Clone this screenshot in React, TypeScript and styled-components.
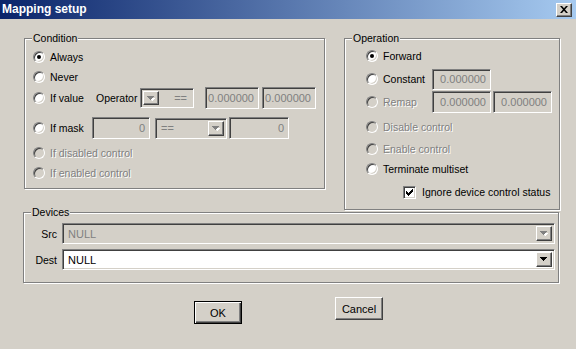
import styled, { createGlobalStyle, css } from "styled-components";

const GlobalStyle = createGlobalStyle`
  body {
    margin: 0;
    background: #d4d0c8;
    font-family: "Liberation Sans", Arial, sans-serif;
    font-size: 10.5px;
    color: #000;
  }
`;

const face = "#d4d0c8";
const shadow = "#808080";
const dark = "#404040";

const Window = styled.div`
  width: 576px;
  height: 349px;
  background: ${face};
  display: flex;
  flex-direction: column;
  overflow: hidden;
`;

const TitleBar = styled.div`
  height: 19px;
  flex-shrink: 0;
  display: flex;
  align-items: center;
  justify-content: space-between;
  padding: 0 4px 0 2px;
  background: linear-gradient(to right, #0a246a, #a6caf0);
`;

const TitleText = styled.span`
  color: #fff;
  font-weight: bold;
  font-size: 12px;
  line-height: 19px;
`;

const raised = css`
  border: 1px solid;
  border-color: #fff ${dark} ${dark} #fff;
  box-shadow: inset -1px -1px ${shadow};
`;

const sunken = css`
  border: 1px solid;
  border-color: ${shadow} #fff #fff ${shadow};
  box-shadow: inset 1px 1px ${dark}, inset -1px -1px ${face};
`;

const CloseButton = styled.div`
  width: 16px;
  height: 14px;
  box-sizing: border-box;
  background: ${face};
  ${raised};
  display: flex;
  align-items: center;
  justify-content: center;
`;

const Body = styled.div`
  display: flex;
  flex-direction: column;
  padding-left: 23px;
`;

const TopRow = styled.div`
  display: flex;
  align-items: flex-start;
  margin-top: 19px;
`;

const Group = styled.div<{ $w: number; $h: number; $ml?: number; $mt?: number; $pt: number; $pl: number }>`
  position: relative;
  box-sizing: border-box;
  width: ${(p) => p.$w}px;
  height: ${(p) => p.$h}px;
  margin-left: ${(p) => p.$ml ?? 0}px;
  margin-top: ${(p) => p.$mt ?? 0}px;
  padding: ${(p) => p.$pt}px 0 0 ${(p) => p.$pl}px;
  border: 1px solid ${shadow};
  box-shadow: inset 1px 1px #fff, 1px 1px #fff;
  display: flex;
  flex-direction: column;
`;

const Legend = styled.span`
  position: absolute;
  top: -7px;
  left: 7px;
  line-height: 13px;
  padding: 0 1px;
  background: ${face};
`;

const Row = styled.div<{ $h: number; $mt?: number }>`
  display: flex;
  align-items: center;
  height: ${(p) => p.$h}px;
  margin-top: ${(p) => p.$mt ?? 0}px;
`;

const Radio = styled.span<{ $checked?: boolean; $disabled?: boolean }>`
  position: relative;
  width: 12px;
  height: 12px;
  box-sizing: border-box;
  flex-shrink: 0;
  border-radius: 50%;
  border: 1px solid;
  border-color: ${shadow} #fff #fff ${shadow};
  box-shadow: inset 1px 1px ${dark}, inset -1px -1px ${face};
  background: ${(p) => (p.$disabled ? face : "#fff")};
  margin-right: 5px;
  ${(p) =>
    p.$checked &&
    css`
      &::after {
        content: "";
        position: absolute;
        left: 3px;
        top: 3px;
        width: 4px;
        height: 4px;
        border-radius: 50%;
        background: #000;
      }
    `}
`;

const Label = styled.span<{ $w?: number; $disabled?: boolean; $align?: string; $mr?: number }>`
  white-space: nowrap;
  ${(p) => p.$w !== undefined && `width: ${p.$w}px; flex-shrink: 0;`}
  text-align: ${(p) => p.$align ?? "left"};
  margin-right: ${(p) => p.$mr ?? 0}px;
  ${(p) =>
    p.$disabled &&
    css`
      color: ${shadow};
      text-shadow: 1px 1px #fff;
    `}
`;

const Edit = styled.div<{ $w: number; $h?: number; $ml?: number }>`
  width: ${(p) => p.$w}px;
  height: ${(p) => p.$h ?? 21}px;
  margin-left: ${(p) => p.$ml ?? 0}px;
  box-sizing: border-box;
  flex-shrink: 0;
  ${sunken};
  background: ${face};
  color: ${shadow};
  display: flex;
  align-items: center;
  justify-content: flex-end;
  padding-right: 4px;
  font-size: 11px;
`;

const Combo = styled.div<{ $w: number; $h?: number; $ml?: number; $enabled?: boolean }>`
  width: ${(p) => p.$w}px;
  height: ${(p) => p.$h ?? 21}px;
  margin-left: ${(p) => p.$ml ?? 0}px;
  box-sizing: border-box;
  flex-shrink: 0;
  ${sunken};
  background: ${(p) => (p.$enabled ? "#fff" : face)};
  color: ${(p) => (p.$enabled ? "#000" : shadow)};
  display: flex;
  align-items: stretch;
  padding: 2px;
`;

const ComboText = styled.span<{ $align?: string }>`
  flex: 1;
  display: flex;
  align-items: center;
  justify-content: ${(p) => (p.$align === "right" ? "flex-end" : "flex-start")};
  padding: 0 4px 0 3px;
  font-size: 11px;
`;

const ComboButton = styled.span`
  width: 16px;
  box-sizing: border-box;
  flex-shrink: 0;
  background: ${face};
  ${raised};
  display: flex;
  align-items: center;
  justify-content: center;
`;

const CheckBox = styled.span`
  width: 13px;
  height: 13px;
  box-sizing: border-box;
  flex-shrink: 0;
  border: 1px solid;
  border-color: ${shadow} #fff #fff ${shadow};
  box-shadow: inset 1px 1px ${dark}, inset -1px -1px ${face};
  background: #fff;
  display: flex;
  align-items: center;
  justify-content: center;
  margin: 0 6px 0 37px;
`;

const ButtonRow = styled.div`
  display: flex;
  align-items: flex-start;
  padding-left: 171px;
  margin-top: 14px;
`;

const Button = styled.div<{ $default?: boolean; $mt?: number; $ml?: number }>`
  width: 48px;
  height: 23px;
  box-sizing: border-box;
  margin-top: ${(p) => p.$mt ?? 0}px;
  margin-left: ${(p) => p.$ml ?? 0}px;
  background: ${face};
  display: flex;
  align-items: center;
  justify-content: center;
  font-size: 11px;
  ${(p) =>
    p.$default
      ? css`
          border: 1px solid #000;
          box-shadow: inset 1px 1px #fff, inset -1px -1px ${dark}, inset -2px -2px ${shadow};
        `
      : css`
          border: 1px solid;
          border-color: #fff ${dark} ${dark} #fff;
          box-shadow: inset -1px -1px ${shadow};
        `}
`;

function Arrow({ disabled }: { disabled?: boolean }) {
  return (
    <svg width="8" height="5" viewBox="0 0 8 5">
      {disabled && <path d="M2 1h5v1h-1v1h-1v1h-1z" fill="#fff" transform="translate(1 1)" />}
      <path d="M0 0h7v1h-1v1h-1v1h-1v1h-1v-1h-1v-1h-1v-1h-1z" fill={disabled ? shadow : "#000"} />
    </svg>
  );
}

function RadioRow({
  label,
  checked,
  disabled,
  w,
  h = 20,
  mt,
  children,
}: {
  label: string;
  checked?: boolean;
  disabled?: boolean;
  w?: number;
  h?: number;
  mt?: number;
  children?: React.ReactNode;
}) {
  return (
    <Row $h={h} $mt={mt}>
      <Radio $checked={checked} $disabled={disabled} />
      <Label $w={w} $disabled={disabled}>
        {label}
      </Label>
      {children}
    </Row>
  );
}

export default function App() {
  return (
    <Window>
      <GlobalStyle />
      <TitleBar>
        <TitleText>Mapping setup</TitleText>
        <CloseButton>
          <svg width="8" height="7" viewBox="0 0 8 7">
            <path d="M0 0h2l2 2.2 2-2.2h2l-3 3.5 3 3.5h-2l-2-2.2-2 2.2h-2l3-3.5z" fill="#000" />
          </svg>
        </CloseButton>
      </TitleBar>

      <Body>
        <TopRow>
          <Group $w={301} $h={151} $ml={1} $pt={8} $pl={8}>
            <Legend>Condition</Legend>
            <RadioRow label="Always" checked />
            <RadioRow label="Never" />
            <RadioRow label="If value" w={46} h={22}>
              <Label $w={44}>Operator</Label>
              <Combo $w={54} $h={20}>
                <ComboButton>
                  <Arrow disabled />
                </ComboButton>
                <ComboText $align="right">==</ComboText>
              </Combo>
              <Edit $w={54} $h={22} $ml={11}>0.000000</Edit>
              <Edit $w={54} $h={22} $ml={3}>0.000000</Edit>
            </RadioRow>
            <RadioRow label="If mask" w={42} h={22} mt={8}>
              <Edit $w={58} $h={22}>0</Edit>
              <Combo $w={72} $h={21} $ml={5}>
                <ComboText>==</ComboText>
                <ComboButton>
                  <Arrow disabled />
                </ComboButton>
              </Combo>
              <Edit $w={60} $h={22} $ml={2}>0</Edit>
            </RadioRow>
            <RadioRow label="If disabled control" disabled mt={4} />
            <RadioRow label="If enabled control" disabled />
          </Group>

          <Group $w={216} $h={172} $ml={19} $pt={7} $pl={21}>
            <Legend>Operation</Legend>
            <RadioRow label="Forward" checked />
            <RadioRow label="Constant" w={49} h={22} mt={2}>
              <Edit $w={59}>0.000000</Edit>
            </RadioRow>
            <RadioRow label="Remap" w={49} h={22} mt={1} disabled>
              <Edit $w={59} $h={22}>0.000000</Edit>
              <Edit $w={59} $h={22} $ml={2}>0.000000</Edit>
            </RadioRow>
            <RadioRow label="Disable control" disabled mt={4} />
            <RadioRow label="Enable control" disabled mt={2} />
            <RadioRow label="Terminate multiset" />
            <Row $h={20} $mt={3}>
              <CheckBox>
                <svg width="7" height="7" viewBox="0 0 7 7">
                  <path d="M0 2h1v1h1v1h1v-1h1v-1h1v-1h1v-1h1v3h-1v1h-1v1h-1v1h-1v1h-1v-1h-1v-1h-1v-1h-1z" fill="#000" />
                </svg>
              </CheckBox>
              <Label>Ignore device control status</Label>
            </Row>
          </Group>
        </TopRow>

        <Group $w={536} $h={71} $mt={2} $pt={10} $pl={0}>
          <Legend>Devices</Legend>
          <Row $h={21}>
            <Label $w={33} $align="right" $mr={5}>
              Src
            </Label>
            <Combo $w={493}>
              <ComboText>NULL</ComboText>
              <ComboButton>
                <Arrow disabled />
              </ComboButton>
            </Combo>
          </Row>
          <Row $h={21} $mt={5}>
            <Label $w={33} $align="right" $mr={5}>
              Dest
            </Label>
            <Combo $w={493} $enabled>
              <ComboText>NULL</ComboText>
              <ComboButton>
                <Arrow />
              </ComboButton>
            </Combo>
          </Row>
        </Group>

        <ButtonRow>
          <Button $default $mt={4}>
            OK
          </Button>
          <Button $ml={93}>Cancel</Button>
        </ButtonRow>
      </Body>
    </Window>
  );
}
